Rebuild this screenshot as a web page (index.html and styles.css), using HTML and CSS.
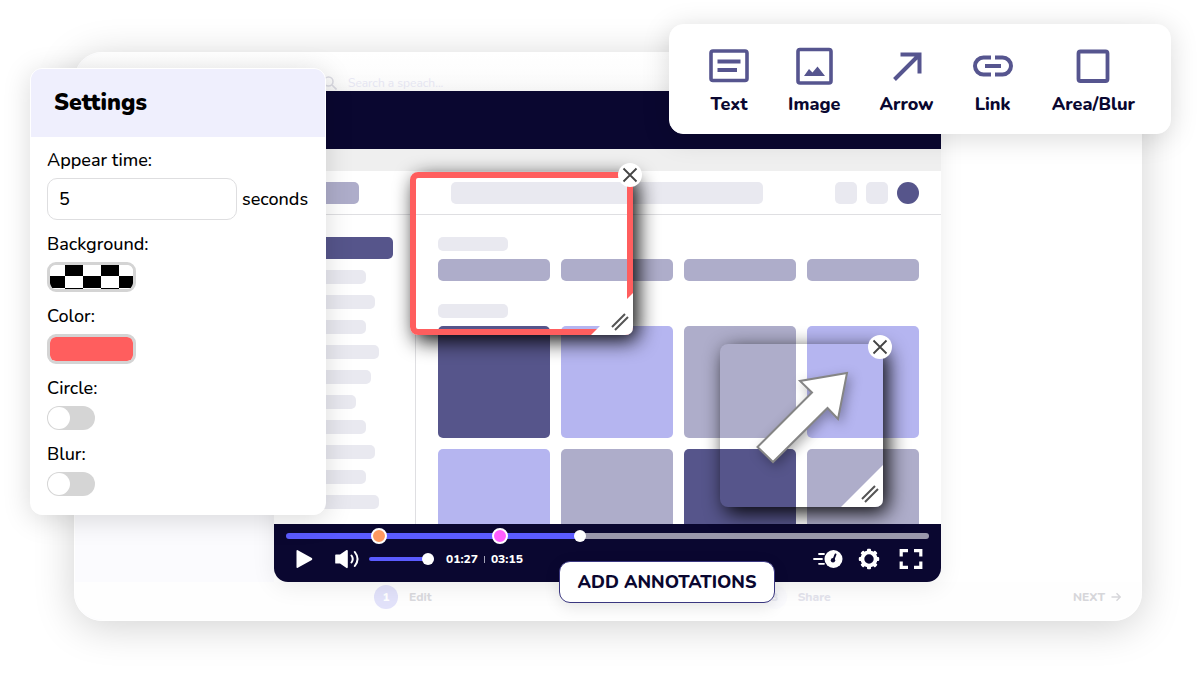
FILE: index.html
```html
<!DOCTYPE html>
<html lang="en">
<head>
<meta charset="utf-8">
<meta name="viewport" content="width=device-width, initial-scale=1">
<title>Annotations</title>
<link rel="stylesheet" href="styles.css">
</head>
<body>
<main class="stage">
  <section class="app">
    <header class="app-top">
      <label class="search">
        <svg width="14" height="14" viewBox="0 0 14 14" fill="none" stroke="#dcdce4" stroke-width="1.6" aria-hidden="true"><circle cx="5.5" cy="5.5" r="4.5"/><path d="M9 9l4.5 4.5"/></svg>
        <input type="search" placeholder="Search a speach..." aria-label="Search">
      </label>
    </header>

    <div class="player">
      <div class="player-head"></div>
      <div class="video">
        <div class="strip"></div>
        <div class="mock-nav">
          <span class="block logo"></span>
          <span class="block field"></span>
          <span class="block small"></span>
          <span class="block small"></span>
          <span class="avatar"></span>
        </div>
        <div class="mock-body">
          <div class="mock-side">
            <span class="bar active"></span>
            <span class="bar w-m"></span>
            <span class="bar w-l"></span>
            <span class="bar w-m"></span>
            <span class="bar w-xl"></span>
            <span class="bar w-n"></span>
            <span class="bar w-s"></span>
            <span class="bar w-m"></span>
            <span class="bar w-l"></span>
            <span class="bar w-m"></span>
            <span class="bar w-xl"></span>
          </div>
          <div class="mock-main">
            <span class="caption"></span>
            <div class="grid chips"><span></span><span></span><span></span><span></span></div>
            <span class="caption"></span>
            <div class="grid tiles">
              <span class="dark"></span><span class="lilac"></span><span class="gray"></span><span class="lilac"></span>
              <span class="lilac"></span><span class="gray"></span><span class="dark"></span><span class="gray"></span>
            </div>
          </div>
        </div>
      </div>

      <div class="controls">
        <div class="timeline">
          <input class="range seek" type="range" min="0" max="195" value="89" aria-label="Seek">
          <button class="marker orange" type="button" aria-label="First annotation"></button>
          <button class="marker pink" type="button" aria-label="Second annotation"></button>
        </div>
        <div class="control-row">
          <button class="icon play" type="button" aria-label="Play"><svg width="17" height="20" viewBox="0 0 17 20" fill="#fff"><path d="M.5 2Q.5.6 1.8 1.2L15.8 9Q17 10 15.8 11L1.8 18.8Q.5 19.4 .5 18Z"/></svg></button>
          <button class="icon mute" type="button" aria-label="Mute"><svg width="26" height="20" viewBox="0 0 26 20" fill="none"><path d="M2 5.500H6L12.500 1Q13.800.5 13.800 2V18Q13.800 19.500 12.500 19L6 14.500H2Q1.200 14.500 1.200 14V6Q1.200 5.500 2 5.500Z" fill="#fff"/><path d="M17.500 6.500q2.500 3.500 0 7M20.800 3q5.500 7 0 14" stroke="#fff" stroke-width="2" stroke-linecap="round"/></svg></button>
          <input class="range volume" type="range" min="0" max="100" value="100" aria-label="Volume">
          <span class="time">01:27<i></i>03:15</span>
          <button class="icon speed" type="button" aria-label="Speed"><svg width="30" height="20" viewBox="0 0 30 20" fill="none"><circle cx="20.500" cy="10" r="9" fill="#fff"/><path d="M1 10h8M6 5h5M6 14.800h5" stroke="#fff" stroke-width="1.800" stroke-linecap="round"/><path d="M22.500 5.500L20.300 11" stroke="#0a0730" stroke-width="2" stroke-linecap="round"/><circle cx="20" cy="11.300" r="2.200" fill="#0a0730"/></svg></button>
          <button class="icon gear" type="button" aria-label="Settings"><svg width="22" height="22" viewBox="-11 -11 22 22"><circle r="6.600" fill="none" stroke="#fff" stroke-width="3.800"/><g fill="#fff"><rect x="-2" y="-10.200" width="4" height="4" rx="1"/><rect x="-2" y="-10.200" width="4" height="4" rx="1" transform="rotate(45)"/><rect x="-2" y="-10.200" width="4" height="4" rx="1" transform="rotate(90)"/><rect x="-2" y="-10.200" width="4" height="4" rx="1" transform="rotate(135)"/><rect x="-2" y="-10.200" width="4" height="4" rx="1" transform="rotate(180)"/><rect x="-2" y="-10.200" width="4" height="4" rx="1" transform="rotate(225)"/><rect x="-2" y="-10.200" width="4" height="4" rx="1" transform="rotate(270)"/><rect x="-2" y="-10.200" width="4" height="4" rx="1" transform="rotate(315)"/></g></svg></button>
          <button class="icon full" type="button" aria-label="Full screen"><svg width="24" height="22" viewBox="0 0 24 22" fill="none" stroke="#fff" stroke-width="3.200"><path d="M2.200 8.500V2.600H9M15 2.600h6.800V8.500M21.800 13.500v5.900H15M9 19.400H2.200V13.500"/></svg></button>
        </div>
      </div>

      <div class="note note-area">
        <svg class="fold" width="42" height="42" viewBox="0 0 42 42" aria-hidden="true"><path d="M42 0V34Q42 42 34 42H0Z" fill="#fff"/><path d="M21 34L34 21M24 37L37 24" stroke="#555" stroke-width="2"/></svg>
        <button class="close" type="button" aria-label="Remove area"><svg width="16" height="16" viewBox="0 0 16 16" stroke="#444" stroke-width="1.800"><path d="M1.500 1.500l13 13M14.500 1.500l-13 13"/></svg></button>
      </div>
      <div class="note note-arrow">
        <svg class="big-arrow" width="163" height="163" viewBox="0 0 163 163" aria-hidden="true"><path d="M127 29L118 75L107.500 64L53 118L37.500 103L92 48.500L80 37Z" fill="#fff" stroke="#858585" stroke-width="2"/></svg>
        <svg class="fold" width="42" height="42" viewBox="0 0 42 42" aria-hidden="true"><path d="M42 0V34Q42 42 34 42H0Z" fill="#fff"/><path d="M21 34L34 21M24 37L37 24" stroke="#555" stroke-width="2"/></svg>
        <button class="close" type="button" aria-label="Remove arrow"><svg width="16" height="16" viewBox="0 0 16 16" stroke="#444" stroke-width="1.800"><path d="M1.500 1.500l13 13M14.500 1.500l-13 13"/></svg></button>
      </div>
      <button class="add" type="button">ADD ANNOTATIONS</button>
    </div>

    <footer class="steps">
      <div class="step first"><span class="num">1</span>Edit</div>
      <div class="step last"><span class="num">3</span>Share</div>
      <button class="next" type="button">NEXT <svg width="10" height="10" viewBox="0 0 10 10" fill="none" stroke="#d6d6da" stroke-width="1.400" aria-hidden="true"><path d="M.5 5h8.500M5.500 1.300L9.200 5L5.500 8.700"/></svg></button>
    </footer>
  </section>

  <form class="settings">
    <h2>Settings</h2>
    <div class="fields">
      <label for="time">Appear time:</label>
      <div class="time-row"><input id="time" type="text" value="5"><span>seconds</span></div>
      <label for="background">Background:</label>
      <button id="background" class="swatch" type="button"><span class="checker"></span></button>
      <label for="color">Color:</label>
      <input id="color" class="swatch" type="color" value="#ff5e5e">
      <label for="circle">Circle:</label>
      <input id="circle" class="toggle" type="checkbox">
      <label for="blur">Blur:</label>
      <input id="blur" class="toggle" type="checkbox">
    </div>
  </form>

  <nav class="tools" aria-label="Annotation tools">
    <button type="button"><svg width="40" height="40" viewBox="0 0 40 40" fill="none" stroke="#56558f" stroke-width="3.600"><rect x="2" y="5" width="36" height="29.500" rx="2"/><path d="M8.500 15.500h23M8.500 24h19.500" stroke-width="4"/></svg>Text</button>
    <button type="button"><svg width="40" height="40" viewBox="0 0 40 40" fill="none" stroke="#56558f" stroke-width="3.600"><rect x="4" y="3.500" width="33" height="33.500" rx="2"/><path d="M10 30L15 23L18.500 26.500L23.500 20.500L31 30Z" fill="#56558f" stroke="none"/></svg>Image</button>
    <button type="button"><svg width="40" height="40" viewBox="0 0 40 40" fill="none" stroke="#56558f" stroke-width="4"><path d="M7.500 33.500L31 10M13.500 8.500H32.500V27.500"/></svg>Arrow</button>
    <button type="button"><svg width="40" height="40" viewBox="0 0 40 40" fill="none" stroke="#56558f" stroke-width="4"><path d="M18 11.500H10.500a8.500 8.500 0 0 0 0 17H18M22 11.500h7.500a8.500 8.500 0 0 1 0 17H22M12 20h16"/></svg>Link</button>
    <button type="button"><svg width="40" height="40" viewBox="0 0 40 40" fill="none" stroke="#56558f" stroke-width="3.800"><rect x="5.500" y="5.500" width="29" height="29.500" rx="2"/></svg>Area/Blur</button>
  </nav>
</main>
</body>
</html>
```
FILE: styles.css
```css
* {
  box-sizing: border-box;
}

body {
  margin: 0;
  background: #fff;
  color: #000;
  font-family: "Nunito", "Open Sans", "Noto Sans", sans-serif;
}

button,
input {
  font: inherit;
  color: inherit;
}

button {
  padding: 0;
  border: 0;
  background: none;
  cursor: pointer;
}

.stage {
  position: relative;
  min-height: 100vh;
  padding: 52px 58px 52px 74px;
  overflow: hidden;
}

.app {
  border: 1px solid #fff;
  border-radius: 28px;
  background: linear-gradient(90deg, #fbfbfe 199px, #fff 199px);
  box-shadow: 0 6px 40px rgba(0, 0, 0, 0.18);
}

.app-top {
  height: 38px;
  padding: 20px 0 0 248px;
  border-radius: 28px 28px 0 0;
  background: linear-gradient(#fff, #fbfbfb);
}

.search {
  display: flex;
  align-items: center;
  gap: 11px;
  height: 20px;
}

.search input {
  width: 200px;
  padding: 0;
  border: 0;
  background: none;
  font-size: 12px;
}

.search input::placeholder {
  color: #e8e8f4;
  opacity: 1;
}

/* Player */

.player {
  position: relative;
  margin: 0 200px 0 199px;
  border-radius: 0 0 14px 14px;
  box-shadow: 0 4px 24px rgba(0, 0, 0, 0.08);
}

.player-head {
  height: 58px;
  background: #0a0730;
}

.video {
  height: 375px;
  overflow: hidden;
  background: #fff;
}

.strip {
  height: 22px;
  background: #efefef;
}

.mock-nav {
  display: flex;
  align-items: center;
  gap: 9px;
  height: 44px;
  padding: 0 22px;
  border-bottom: 1px solid #dfdfe2;
}

.block {
  height: 22px;
  border-radius: 5px;
  background: #e9e9f0;
}

.logo {
  width: 63px;
  margin-right: 83px;
  background: #aeadca;
}

.field {
  flex: 1;
  max-width: 312px;
  margin-right: auto;
}

.small {
  width: 22px;
}

.avatar {
  width: 22px;
  height: 22px;
  border-radius: 50%;
  background: #56558b;
}

.mock-body {
  display: flex;
  height: 320px;
}

.mock-side {
  display: flex;
  flex-direction: column;
  gap: 11px;
  width: 142px;
  padding: 22px;
  border-right: 1px solid #dfdfe2;
}

.bar {
  flex: none;
  height: 14px;
  border-radius: 5px;
  background: #e9e9f0;
}

.bar.active {
  height: 22px;
  width: 97px;
  background: #56558b;
}

.w-s { width: 60px; }
.w-m { width: 70px; }
.w-n { width: 75px; }
.w-l { width: 79px; }
.w-xl { width: 83px; }

.mock-main {
  flex: 1;
  padding: 22px;
}

.caption {
  display: block;
  width: 70px;
  height: 14px;
  margin-bottom: 8px;
  border-radius: 5px;
  background: #e9e9f0;
}

.grid {
  display: grid;
  grid-template-columns: repeat(4, 1fr);
  gap: 11px;
}

.chips {
  margin-bottom: 23px;
}

.chips span {
  height: 22px;
  border-radius: 5px;
  background: #aeadca;
}

.tiles span {
  height: 112px;
  border-radius: 5px;
}

.dark { background: #56558b; }
.lilac { background: #b5b5f0; }
.gray { background: #aeadca; }

/* Controls */

.controls {
  height: 58px;
  padding: 6px 12px 0;
  border-radius: 0 0 14px 14px;
  background: #0a0730;
}

.timeline {
  position: relative;
  height: 12px;
}

.range {
  display: block;
  margin: 0;
  height: 12px;
  appearance: none;
  background: none;
}

.range::-webkit-slider-runnable-track {
  height: 6px;
  border-radius: 3px;
  background: #5b5bff;
}

.range::-webkit-slider-thumb {
  width: 12px;
  height: 12px;
  margin-top: -3px;
  appearance: none;
  border-radius: 50%;
  background: #fff;
}

.seek {
  width: 100%;
}

.seek::-webkit-slider-runnable-track {
  background: linear-gradient(90deg, #5b5bff 46%, #9a98ab 46%);
}

.volume::-webkit-slider-runnable-track {
  height: 4px;
}

.volume::-webkit-slider-thumb {
  margin-top: -4px;
}

.marker {
  position: absolute;
  top: -2px;
  width: 16px;
  height: 16px;
  border: 2px solid #fff;
  border-radius: 50%;
}

.orange {
  left: 85px;
  background: #ff9960;
}

.pink {
  left: 206px;
  background: #ff5eff;
}

.control-row {
  display: flex;
  align-items: center;
  height: 34px;
  padding: 0 6px 0 10px;
}

.icon svg {
  display: block;
}

.mute {
  margin-left: 21px;
}

.volume {
  width: 65px;
  margin-left: 9px;
}

.time {
  display: flex;
  align-items: center;
  gap: 6px;
  margin-left: 12px;
  color: #fff;
  font-size: 12px;
  font-weight: 800;
}

.time i {
  width: 1px;
  height: 7px;
  background: #a5a4b8;
}

.speed {
  margin-left: auto;
}

.gear {
  margin-left: 15px;
}

.full {
  margin-left: 19px;
}

/* Annotations on the video */

.note {
  position: absolute;
  border-radius: 8px;
  box-shadow: 5px 6px 20px rgba(0, 0, 0, 0.95);
}

.note-area {
  left: 136px;
  top: 81px;
  width: 223px;
  height: 163px;
  border: 6px solid #ff5e5e;
}

.note-arrow {
  left: 446px;
  top: 253px;
  width: 163px;
  height: 163px;
}

.big-arrow {
  display: block;
  filter: drop-shadow(3px 4px 6px rgba(0, 0, 0, 0.3));
}

.fold {
  position: absolute;
  right: 0;
  bottom: 0;
}

.note-area .fold {
  right: -6px;
  bottom: -6px;
}

.close {
  position: absolute;
  top: -9px;
  right: -9px;
  display: grid;
  place-items: center;
  width: 24px;
  height: 24px;
  border-radius: 50%;
  background: #fff;
}

.note-area .close {
  top: -15px;
  right: -15px;
}

.add {
  position: absolute;
  left: 285px;
  bottom: -21px;
  width: 216px;
  height: 42px;
  border: 1px solid #3a3780;
  border-radius: 11px;
  background: #fff;
  box-shadow: 0 4px 16px rgba(0, 0, 0, 0.1);
  color: #0a0730;
  font-size: 18px;
  font-weight: 800;
}

/* Steps */

.steps {
  display: flex;
  align-items: center;
  height: 38px;
  padding: 0 20px 8px 299px;
  border-radius: 0 0 28px 28px;
  background: #fefefe;
  font-size: 12px;
  font-weight: 800;
}

.step {
  display: flex;
  align-items: center;
  gap: 11px;
  color: #dadade;
}

.num {
  display: grid;
  place-items: center;
  width: 24px;
  height: 24px;
  border-radius: 50%;
  background: #e2e2fa;
  color: #fff;
}

.last {
  margin-left: 331px;
  color: #e3e3ec;
}

.last .num {
  background: #fbfbfe;
  color: #ececf4;
}

.next {
  display: flex;
  align-items: center;
  gap: 6px;
  margin-left: auto;
  color: #d6d6da;
}

/* Settings */

.settings {
  position: absolute;
  left: 30px;
  top: 68px;
  width: 296px;
  border: 1px solid #fff;
  border-radius: 12px;
  background: #fff;
  box-shadow: 0 4px 28px rgba(0, 0, 0, 0.15);
  overflow: hidden;
}

.settings h2 {
  margin: 0;
  padding: 20px 23px;
  background: #efeffd;
  font-size: 23px;
  font-weight: 900;
  line-height: 28px;
}

.fields {
  display: flex;
  flex-direction: column;
  align-items: flex-start;
  padding: 11px 17px 18px 16px;
  font-size: 18px;
  font-weight: 500;
  line-height: 24px;
}

.fields label {
  margin-bottom: 6px;
}

.time-row {
  display: flex;
  align-items: center;
  gap: 5px;
  margin-bottom: 12px;
}

.time-row input {
  width: 190px;
  height: 42px;
  padding: 0 11px;
  border: 1px solid #dedee0;
  border-radius: 10px;
  background: #fff;
}

.swatch {
  width: 89px;
  height: 30px;
  margin-bottom: 12px;
  padding: 0;
  border: 3px solid #d4d4d4;
  border-radius: 9px;
  background: #fff;
  overflow: hidden;
}

.swatch::-webkit-color-swatch-wrapper {
  padding: 0;
}

.swatch::-webkit-color-swatch {
  border: 0;
  border-radius: 5px;
}

.checker {
  display: block;
  height: 100%;
  border-radius: 5px;
  background: repeating-conic-gradient(#000 0 25%, #fff 0 50%) -3px -1px / 36px 24px;
}

.toggle {
  width: 48px;
  height: 24px;
  margin: 0 0 12px;
  padding: 1px;
  appearance: none;
  border-radius: 12px;
  background: #d5d5d5;
}

.toggle:last-child {
  margin-bottom: 0;
}

.toggle::before {
  content: "";
  display: block;
  width: 22px;
  height: 22px;
  border-radius: 50%;
  background: #fff;
}

.toggle:checked {
  background: #5b5bff;
}

.toggle:checked::before {
  margin-left: auto;
}

/* Tools */

.tools {
  position: absolute;
  top: 24px;
  right: 29px;
  display: flex;
  justify-content: space-between;
  width: 502px;
  padding: 21px 35px 17px 39px;
  border: 1px solid #fff;
  border-radius: 14px;
  background: #fff;
  box-shadow: 0 4px 28px rgba(0, 0, 0, 0.15);
}

.tools button {
  display: flex;
  flex-direction: column;
  align-items: center;
  gap: 6px;
  color: #0a0730;
  font-size: 18px;
  font-weight: 800;
  line-height: 24px;
}
```
